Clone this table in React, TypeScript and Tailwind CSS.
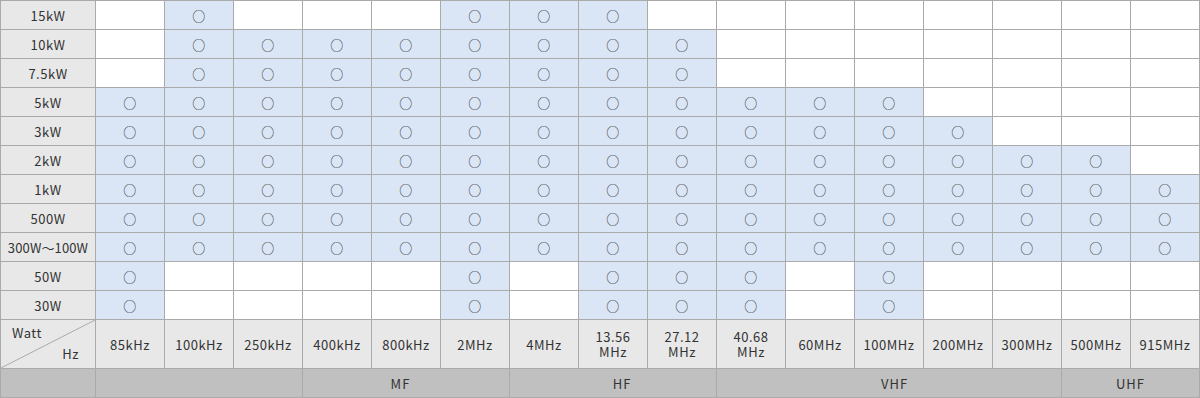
import React from "react";

const freqs = [
  "85kHz", "100kHz", "250kHz", "400kHz", "800kHz", "2MHz", "4MHz",
  "13.56\nMHz", "27.12\nMHz", "40.68\nMHz", "60MHz", "100MHz",
  "200MHz", "300MHz", "500MHz", "915MHz",
];

const range = (a: number, b: number) =>
  Array.from({ length: b - a + 1 }, (_, i) => a + i);

const rows: { label: string; on: number[] }[] = [
  { label: "15kW", on: [1, 5, 6, 7] },
  { label: "10kW", on: range(1, 8) },
  { label: "7.5kW", on: range(1, 8) },
  { label: "5kW", on: range(0, 11) },
  { label: "3kW", on: range(0, 12) },
  { label: "2kW", on: range(0, 14) },
  { label: "1kW", on: range(0, 15) },
  { label: "500W", on: range(0, 15) },
  { label: "300W〜100W", on: range(0, 15) },
  { label: "50W", on: [0, 5, 7, 8, 9, 11] },
  { label: "30W", on: [0, 5, 7, 8, 9, 11] },
];

// band labels sit a little off centre in the original, hence the padding
const bands = [
  { label: "", span: 3, pad: "" },
  { label: "MF", span: 3, pad: "pr-[11px]" },
  { label: "HF", span: 3, pad: "pl-[18px]" },
  { label: "VHF", span: 5, pad: "pl-[11px]" },
  { label: "UHF", span: 2, pad: "" },
];

export default function App() {
  return (
    <div className="w-[1200px] h-[398px] bg-white text-[#333] font-['Noto_Sans_CJK_JP','Noto_Sans',sans-serif]">
      <table className="w-[1200px] table-fixed border-collapse text-[13px] tracking-[0.04em]">
        <colgroup>
          <col className="w-[95px]" />
          {freqs.map((f) => (
            <col key={f} className="w-[69px]" />
          ))}
        </colgroup>
        <tbody>
          {rows.map((r) => (
            <tr key={r.label} className="h-[29px]">
              <td
                className={`border border-[#aaa] bg-[#e8e8e8] text-center p-0 leading-none ${
                  r.label.length > 6 ? "tracking-[0.01em]" : ""
                }`}
              >
                {r.label}
              </td>
              {freqs.map((f, i) => {
                const on = r.on.includes(i);
                return (
                  <td
                    key={f}
                    className={`border border-[#aaa] text-center p-0 leading-none ${
                      on ? "bg-[#dae6f6]" : "bg-white"
                    }`}
                  >
                    {on ? "○" : ""}
                  </td>
                );
              })}
            </tr>
          ))}
          <tr className="h-[49px]">
            <td className="relative border border-[#aaa] bg-[#e8e8e8] p-0">
              <svg
                className="absolute inset-0 w-full h-full"
                viewBox="0 0 100 100"
                preserveAspectRatio="none"
              >
                <line
                  x1="0"
                  y1="100"
                  x2="100"
                  y2="0"
                  stroke="#aaa"
                  strokeWidth="1"
                  vectorEffect="non-scaling-stroke"
                />
              </svg>
              <div className="relative flex flex-col h-[48px] justify-between px-[11px] pt-[6px] pb-[8px] leading-none">
                <span className="self-start">Watt</span>
                <span className="self-end pr-[5px]">Hz</span>
              </div>
            </td>
            {freqs.map((f) => (
              <td
                key={f}
                className="border border-[#aaa] bg-[#e8e8e8] text-center p-0 leading-[15px] whitespace-pre-line"
              >
                {f}
              </td>
            ))}
          </tr>
          <tr className="h-[29px]">
            <td className="border border-[#aaa] bg-[#c0c0c0] p-0" />
            {bands.map((b, i) => (
              <td
                key={i}
                colSpan={b.span}
                className={`border border-[#aaa] bg-[#c0c0c0] text-center p-0 leading-none tracking-[0.08em] ${b.pad}`}
              >
                {b.label}
              </td>
            ))}
          </tr>
        </tbody>
      </table>
    </div>
  );
}
